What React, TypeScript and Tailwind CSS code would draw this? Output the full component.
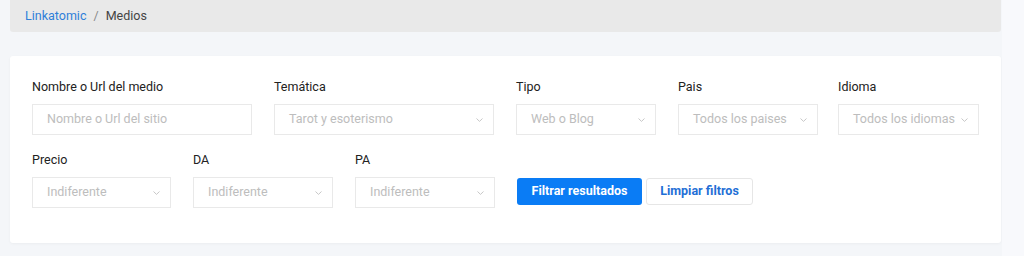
import React from "react";

const Chevron = () => (
  <svg width="9" height="6" viewBox="0 0 9 6" fill="none" className="shrink-0">
    <path d="M1.5 1.5 L4.5 4.4 L7.5 1.5" stroke="#c8c8c8" strokeWidth="1" />
  </svg>
);

function Field({ label, w, value, select = true, extra = "" }: { label: string; w: string; value: string; select?: boolean; extra?: string }) {
  return (
    <div className={`flex flex-col ${w} ${extra}`}>
      <div className="text-[12.5px] leading-[16px] text-[#222] mb-[9px]">{label}</div>
      <div className="h-[31px] border border-[#e9e9e9] bg-white flex items-center pl-[14px] pr-[9px] justify-between">
        <span className="text-[12.5px] text-[#bdbdbd] whitespace-nowrap">{value}</span>
        {select && <Chevron />}
      </div>
    </div>
  );
}

export default function App() {
  return (
    <div className="w-[1024px] h-[256px] bg-[#f4f6f9] flex" style={{ fontFamily: "Roboto, 'Liberation Sans', sans-serif" }}>
      <div className="w-[1002px] pl-[10px] pr-[1px] flex flex-col">
        <div className="h-[32px] bg-[#e9e9e9] rounded-b-[3px] flex items-center pl-[15px] text-[12.5px]">
          <span className="text-[#2f7fd9]">Linkatomic</span>
          <span className="text-[#8a8a8a] mx-[7px]">/</span>
          <span className="text-[#444]">Medios</span>
        </div>
        <div className="mt-[24px] h-[187px] bg-white rounded-[3px] shadow-[0_1px_3px_rgba(0,0,0,0.04)] pl-[22px] pt-[23px]">
          <div className="flex gap-[22px]">
            <Field label="Nombre o Url del medio" w="w-[220px]" value="Nombre o Url del sitio" select={false} />
            <Field label="Temática" w="w-[220px]" value="Tarot y esoterismo" />
            <Field label="Tipo" w="w-[140px]" value="Web o Blog" />
            <Field label="Pais" w="w-[140px]" value="Todos los paises" />
            <Field label="Idioma" w="w-[141px]" value="Todos los idiomas" extra="-ml-[2px]" />
          </div>
          <div className="flex gap-[22px] mt-[17px] items-end">
            <Field label="Precio" w="w-[139px]" value="Indiferente" />
            <Field label="DA" w="w-[140px]" value="Indiferente" />
            <Field label="PA" w="w-[140px]" value="Indiferente" />
            <div className="flex gap-[4px] mb-[3px]">
              <button className="h-[27px] w-[125px] bg-[#0a7cf5] rounded-[3px] text-white text-[12.5px] font-bold">Filtrar resultados</button>
              <button className="h-[27px] w-[107px] bg-white border border-[#e6e6e6] rounded-[3px] text-[#1f6fd6] text-[12.5px] font-bold">Limpiar filtros</button>
            </div>
          </div>
        </div>
      </div>
      <div className="flex-1 bg-[#f8f9fc]" />
    </div>
  );
}
